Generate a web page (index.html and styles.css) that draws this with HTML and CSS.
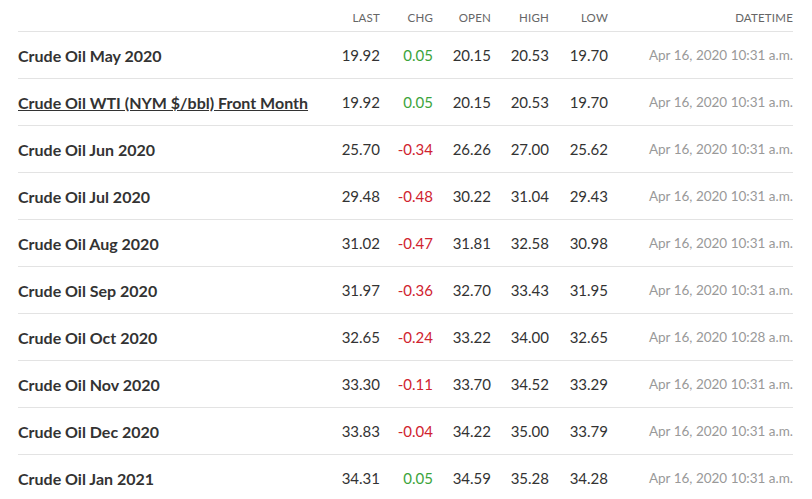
FILE: index.html
```html
<!DOCTYPE html>
<html>
<head>
<meta charset="utf-8">
<link rel="stylesheet" href="styles.css">
</head>
<body>
<div class="quotes">
  <div class="row head">
    <div class="c name"></div>
    <div class="c">LAST</div>
    <div class="c">CHG</div>
    <div class="c">OPEN</div>
    <div class="c">HIGH</div>
    <div class="c">LOW</div>
    <div class="c">DATETIME</div>
  </div>
  <div class="row">
    <div class="c name">Crude Oil May 2020</div>
    <div class="c">19.92</div><div class="c up">0.05</div><div class="c">20.15</div><div class="c">20.53</div><div class="c">19.70</div>
    <div class="c dt">Apr 16, 2020 10:31 a.m.</div>
  </div>
  <div class="row">
    <div class="c name"><a href="#">Crude Oil WTI (NYM $/bbl) Front Month</a></div>
    <div class="c">19.92</div><div class="c up">0.05</div><div class="c">20.15</div><div class="c">20.53</div><div class="c">19.70</div>
    <div class="c dt">Apr 16, 2020 10:31 a.m.</div>
  </div>
  <div class="row">
    <div class="c name">Crude Oil Jun 2020</div>
    <div class="c">25.70</div><div class="c down">-0.34</div><div class="c">26.26</div><div class="c">27.00</div><div class="c">25.62</div>
    <div class="c dt">Apr 16, 2020 10:31 a.m.</div>
  </div>
  <div class="row">
    <div class="c name">Crude Oil Jul 2020</div>
    <div class="c">29.48</div><div class="c down">-0.48</div><div class="c">30.22</div><div class="c">31.04</div><div class="c">29.43</div>
    <div class="c dt">Apr 16, 2020 10:31 a.m.</div>
  </div>
  <div class="row">
    <div class="c name">Crude Oil Aug 2020</div>
    <div class="c">31.02</div><div class="c down">-0.47</div><div class="c">31.81</div><div class="c">32.58</div><div class="c">30.98</div>
    <div class="c dt">Apr 16, 2020 10:31 a.m.</div>
  </div>
  <div class="row">
    <div class="c name">Crude Oil Sep 2020</div>
    <div class="c">31.97</div><div class="c down">-0.36</div><div class="c">32.70</div><div class="c">33.43</div><div class="c">31.95</div>
    <div class="c dt">Apr 16, 2020 10:31 a.m.</div>
  </div>
  <div class="row">
    <div class="c name">Crude Oil Oct 2020</div>
    <div class="c">32.65</div><div class="c down">-0.24</div><div class="c">33.22</div><div class="c">34.00</div><div class="c">32.65</div>
    <div class="c dt">Apr 16, 2020 10:28 a.m.</div>
  </div>
  <div class="row">
    <div class="c name">Crude Oil Nov 2020</div>
    <div class="c">33.30</div><div class="c down">-0.11</div><div class="c">33.70</div><div class="c">34.52</div><div class="c">33.29</div>
    <div class="c dt">Apr 16, 2020 10:31 a.m.</div>
  </div>
  <div class="row">
    <div class="c name">Crude Oil Dec 2020</div>
    <div class="c">33.83</div><div class="c down">-0.04</div><div class="c">34.22</div><div class="c">35.00</div><div class="c">33.79</div>
    <div class="c dt">Apr 16, 2020 10:31 a.m.</div>
  </div>
  <div class="row">
    <div class="c name">Crude Oil Jan 2021</div>
    <div class="c">34.31</div><div class="c up">0.05</div><div class="c">34.59</div><div class="c">35.28</div><div class="c">34.28</div>
    <div class="c dt">Apr 16, 2020 10:31 a.m.</div>
  </div>
</div>
</body>
</html>
```

FILE: styles.css
```css
html, body {
  margin: 0;
  padding: 0;
  background: #fff;
}
body {
  padding: 0 19px 0 18px;
  font-family: Lato, "Liberation Sans", sans-serif;
  color: #333;
  overflow: hidden;
}
.quotes {
  display: flex;
  flex-direction: column;
}
.row {
  display: grid;
  grid-template-columns: 1fr 60px 53px 58px 58px 59px 185px;
  align-items: center;
  height: 46px;
  border-bottom: 1px solid #e3e3e3;
  font-size: 15px;
}
.row.head {
  height: 32px;
  box-sizing: border-box;
  padding-top: 3px;
  font-size: 11.5px;
  color: #666;
  letter-spacing: 0.2px;
}
.c {
  text-align: right;
  white-space: nowrap;
}
.c.name {
  text-align: left;
  font-size: 16px;
  font-weight: 700;
  color: #333;
}
.c.name a {
  color: #333;
  text-decoration: underline;
}
.up { color: #3ca43c; }
.down { color: #d0232f; }
.dt {
  font-size: 13.5px;
  color: #999;
}
```
